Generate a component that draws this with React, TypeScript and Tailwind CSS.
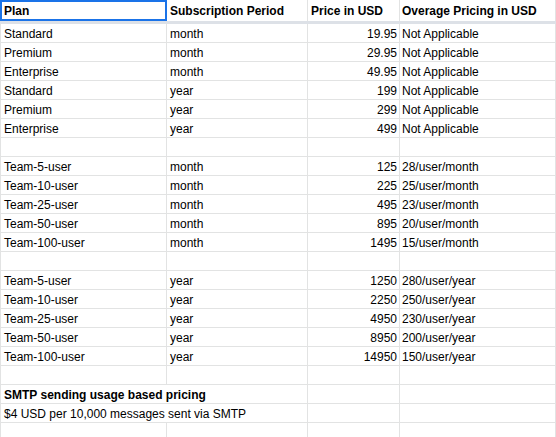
import React from "react";

type Row = [string, string, string, string] | null;

const rows: Row[] = [
  ["Standard", "month", "19.95", "Not Applicable"],
  ["Premium", "month", "29.95", "Not Applicable"],
  ["Enterprise", "month", "49.95", "Not Applicable"],
  ["Standard", "year", "199", "Not Applicable"],
  ["Premium", "year", "299", "Not Applicable"],
  ["Enterprise", "year", "499", "Not Applicable"],
  null,
  ["Team-5-user", "month", "125", "28/user/month"],
  ["Team-10-user", "month", "225", "25/user/month"],
  ["Team-25-user", "month", "495", "23/user/month"],
  ["Team-50-user", "month", "895", "20/user/month"],
  ["Team-100-user", "month", "1495", "15/user/month"],
  null,
  ["Team-5-user", "year", "1250", "280/user/year"],
  ["Team-10-user", "year", "2250", "250/user/year"],
  ["Team-25-user", "year", "4950", "230/user/year"],
  ["Team-50-user", "year", "8950", "200/user/year"],
  ["Team-100-user", "year", "14950", "150/user/year"],
  null,
];

const line = "border-[#e2e3e3]";

function DataRow({ r }: { r: Row }) {
  return (
    <div className={`flex h-[19px] border-l ${line}`}>
      <div className={`w-[166px] shrink-0 border-r border-b ${line} pl-[3px] pt-[2px] flex items-center whitespace-nowrap`}>
        {r ? r[0] : ""}
      </div>
      <div className={`w-[141px] shrink-0 border-r border-b ${line} pl-[3px] pt-[2px] flex items-center whitespace-nowrap`}>
        {r ? r[1] : ""}
      </div>
      <div className={`w-[92px] shrink-0 border-r border-b ${line} pr-[2px] pt-[2px] flex items-center justify-end whitespace-nowrap`}>
        {r ? r[2] : ""}
      </div>
      <div className={`w-[156px] shrink-0 border-r border-b ${line} pl-[2px] pt-[2px] flex items-center whitespace-nowrap`}>
        {r ? r[3] : ""}
      </div>
    </div>
  );
}

function MergedRow({ text, bold }: { text: string; bold?: boolean }) {
  return (
    <div className={`flex h-[19px] border-l ${line}`}>
      <div
        className={`w-[307px] shrink-0 border-r border-b ${line} pl-[3px] pt-[2px] flex items-center whitespace-nowrap ${bold ? "font-bold" : ""}`}
      >
        {text}
      </div>
      <div className={`w-[92px] shrink-0 border-r border-b ${line}`} />
      <div className={`w-[156px] shrink-0 border-r border-b ${line}`} />
    </div>
  );
}

export default function App() {
  return (
    <div
      className="w-[556px] h-[437px] overflow-hidden bg-white text-[12px] leading-none text-black"
      style={{ fontFamily: '"Liberation Sans", Arial, sans-serif' }}
    >
      <div className="flex h-[21px] font-bold">
        <div className="w-[167px] h-[21px] shrink-0 border-2 border-[#1a73e8] pl-[2px] flex items-center whitespace-nowrap">
          Plan
        </div>
        <div className={`w-[141px] shrink-0 border-r ${line} pl-[3px] flex items-center whitespace-nowrap`}>
          Subscription Period
        </div>
        <div className={`w-[92px] shrink-0 border-r ${line} pl-[3px] flex items-center whitespace-nowrap`}>
          Price in USD
        </div>
        <div className={`w-[156px] shrink-0 border-r ${line} pl-[2px] flex items-center whitespace-nowrap`}>
          Overage Pricing in USD
        </div>
      </div>
      <div className="h-[3px] bg-[#dde1e7]" />
      {rows.map((r, i) => (
        <DataRow key={i} r={r} />
      ))}
      <MergedRow text="SMTP sending usage based pricing" bold />
      <MergedRow text="$4 USD per 10,000 messages sent via SMTP" />
      <DataRow r={null} />
    </div>
  );
}
